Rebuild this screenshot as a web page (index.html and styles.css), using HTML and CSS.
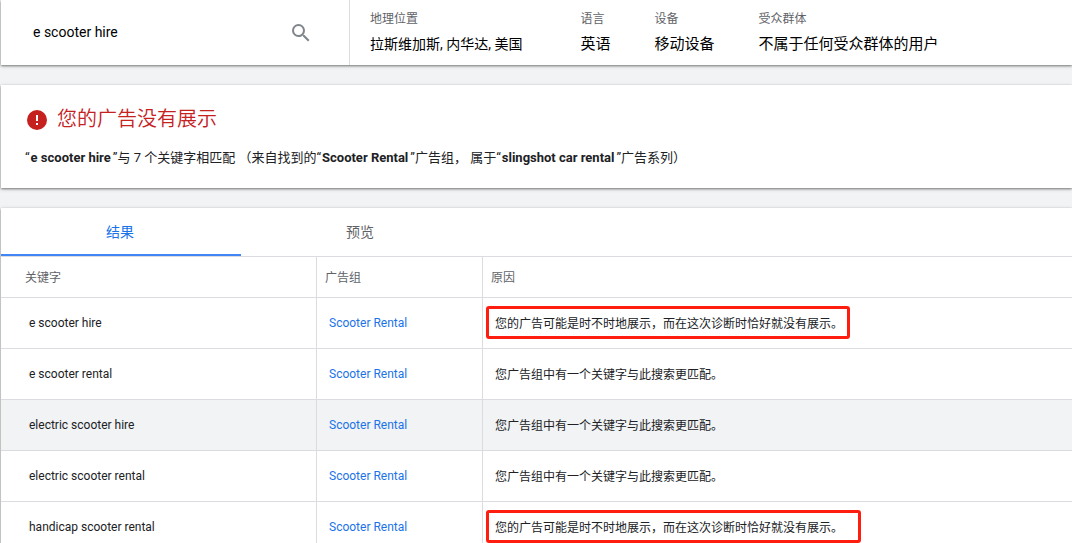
FILE: index.html
```html
<!DOCTYPE html>
<html lang="zh-CN">
<head>
<meta charset="utf-8">
<title>广告预览和诊断</title>
<link rel="stylesheet" href="styles.css">
</head>
<body>
<main class="page">
  <header class="card toolbar">
    <form class="search">
      <input class="search-input" type="text" value="e scooter hire" aria-label="搜索字词">
      <button class="search-button" type="button" aria-label="搜索">
        <svg viewBox="0 0 24 24" width="24" height="24" aria-hidden="true"><path fill="currentColor" d="M15.5 14h-.79l-.28-.27A6.47 6.47 0 0 0 16 9.5 6.5 6.5 0 1 0 9.5 16c1.61 0 3.09-.59 4.23-1.57l.27.28v.79l5 4.99L20.49 19l-4.99-5zm-6 0C7.01 14 5 11.99 5 9.5S7.01 5 9.5 5 14 7.01 14 9.5 11.99 14 9.5 14z"/></svg>
      </button>
    </form>
    <dl class="settings">
      <div class="setting setting-place"><dt>地理位置</dt><dd>拉斯维加斯, 内华达, 美国</dd></div>
      <div class="setting"><dt>语言</dt><dd>英语</dd></div>
      <div class="setting"><dt>设备</dt><dd>移动设备</dd></div>
      <div class="setting"><dt>受众群体</dt><dd>不属于任何受众群体的用户</dd></div>
    </dl>
  </header>

  <section class="card status">
    <h1 class="status-title">
      <svg viewBox="2 2 20 20" width="20" height="20" aria-hidden="true"><circle cx="12" cy="12" r="10" fill="#c5221f"/><path fill="#fff" d="M11 7h2v6h-2zM11 15h2v2h-2z"/></svg>
      <span>您的广告没有展示</span>
    </h1>
    <p class="status-text">“<b>e scooter hire</b>”与 7 个关键字相匹配 （来自找到的“<b>Scooter Rental</b>”广告组， 属于“<b>slingshot car rental</b>”广告系列）</p>
  </section>

  <section class="card results">
    <div class="tabs" role="tablist">
      <button class="tab tab-active" type="button" role="tab" aria-selected="true">结果</button>
      <button class="tab" type="button" role="tab" aria-selected="false">预览</button>
    </div>
    <table class="keywords">
      <colgroup><col class="col-keyword"><col class="col-group"><col></colgroup>
      <thead>
        <tr><th scope="col">关键字</th><th scope="col">广告组</th><th scope="col">原因</th></tr>
      </thead>
      <tbody>
        <tr><td>e scooter hire</td><td><a href="#">Scooter Rental</a></td><td class="cell-marked"><span class="marked">您的广告可能是时不时地展示，而在这次诊断时恰好就没有展示。</span></td></tr>
        <tr><td>e scooter rental</td><td><a href="#">Scooter Rental</a></td><td>您广告组中有一个关键字与此搜索更匹配。</td></tr>
        <tr class="row-hover"><td>electric scooter hire</td><td><a href="#">Scooter Rental</a></td><td>您广告组中有一个关键字与此搜索更匹配。</td></tr>
        <tr><td>electric scooter rental</td><td><a href="#">Scooter Rental</a></td><td>您广告组中有一个关键字与此搜索更匹配。</td></tr>
        <tr><td>handicap scooter rental</td><td><a href="#">Scooter Rental</a></td><td class="cell-marked"><span class="marked marked-wide">您的广告可能是时不时地展示，而在这次诊断时恰好就没有展示。</span></td></tr>
      </tbody>
    </table>
  </section>
</main>
</body>
</html>
```
FILE: styles.css
```css
* {
  box-sizing: border-box;
}

body {
  margin: 0;
  background: #f1f3f4;
  color: #202124;
  font-family: Roboto, "Noto Sans CJK SC", sans-serif;
  font-size: 12px;
}

button,
input {
  margin: 0;
  padding: 0;
  border: 0;
  background: none;
  font: inherit;
  color: inherit;
}

.page {
  display: flex;
  flex-direction: column;
  gap: 20px;
  padding-left: 1px;
}

.card {
  background: #fff;
  box-shadow: 0 1px 2px rgba(0, 0, 0, 0.4), 0 1px 4px rgba(0, 0, 0, 0.2);
}

/* Search term and preview settings */
.toolbar {
  display: flex;
  height: 65px;
}

.search {
  display: flex;
  align-items: center;
  width: 349px;
  padding: 0 36px 0 32px;
  border-right: 1px solid #dadce0;
}

.search-input {
  flex: 1;
  min-width: 0;
  padding-bottom: 2px;
  font-size: 14px;
  color: #000;
}

.search-button {
  display: flex;
  color: #80868b;
}

.settings {
  display: flex;
  margin: 0;
  padding: 9px 20px;
}

.setting {
  margin-right: 44px;
}

.setting-place {
  margin-right: 58px;
}

.setting dt {
  color: #5f6368;
  line-height: 20px;
}

.setting dd {
  margin: 4px 0 0;
  color: #000;
  font-size: 15px;
  line-height: 22px;
}

.setting-place dd {
  font-size: 14px;
}

/* Diagnosis summary */
.status {
  padding: 20px 24px;
}

.status-title {
  display: flex;
  align-items: center;
  gap: 10px;
  margin: 0;
  padding-left: 2px;
  color: #c5221f;
  font-size: 20px;
  font-weight: 350;
  line-height: 29px;
}

.status-text {
  margin: 14px 0 0;
  font-size: 13px;
  line-height: 20px;
}

.status-text b {
  margin: 0 2px 0 1px;
  font-weight: 700;
}

/* Keyword results */
.tabs {
  display: flex;
  height: 49px;
  border-bottom: 1px solid #dadce0;
}

.tab {
  width: 240px;
  border-bottom: 2px solid transparent;
  padding-right: 2px;
  color: #5f6368;
  font-size: 14px;
}

.tab-active {
  border-bottom-color: #4285f4;
  color: #1a73e8;
}

.keywords {
  width: 100%;
  table-layout: fixed;
  border-collapse: separate;
  border-spacing: 0;
}

.col-keyword {
  width: 316px;
}

.col-group {
  width: 166px;
}

.keywords th,
.keywords td {
  border-right: 1px solid #dadce0;
  border-bottom: 1px solid #dadce0;
  text-align: left;
}

.keywords th:last-child,
.keywords td:last-child {
  border-right: 0;
}

.keywords th {
  height: 41px;
  padding: 0 8px 2px;
  color: #5f6368;
  font-weight: 400;
}

.keywords th:first-child {
  padding-left: 24px;
}

.keywords td {
  height: 51px;
  padding: 0 12px;
}

.keywords td:first-child {
  padding-left: 28px;
}

.keywords td:last-child {
  padding-bottom: 2px;
}

.keywords .cell-marked {
  padding: 0 3px 3px;
}

.keywords a {
  color: #1a73e8;
  text-decoration: none;
}

.row-hover {
  background: #f1f3f4;
}

.marked {
  display: inline-block;
  padding: 6px 4px 3px 6px;
  border: 3px solid #ff1d10;
  border-radius: 3px;
  line-height: 18px;
  vertical-align: middle;
}

.marked-wide {
  padding-right: 15px;
}
```
